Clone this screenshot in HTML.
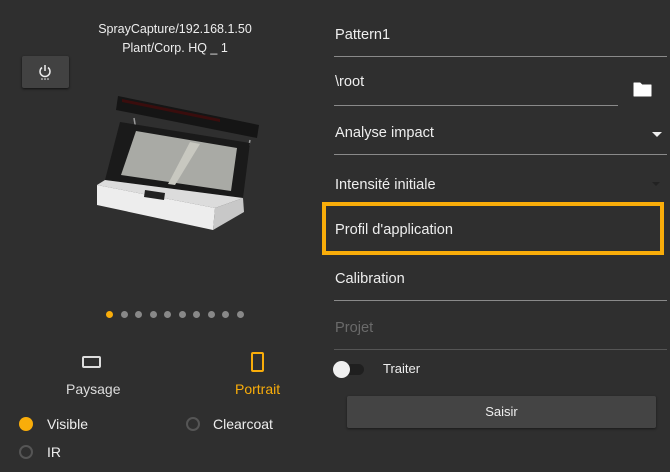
<!DOCTYPE html><html><head><style>
body{margin:0;width:670px;height:472px;background:#2f2f2f;font-family:"Liberation Sans",sans-serif;color:#eee;position:relative;overflow:hidden}
.a{position:absolute}
.t{font-size:14px}
.r{font-size:14.6px}
.line{position:absolute;height:1px;background:#8a8a8a}
</style></head><body>
<div class="a" style="left:0;width:350px;top:20px;text-align:center;font-size:12.5px;line-height:19px;color:#eee">SprayCapture/192.168.1.50<br>Plant/Corp. HQ _ 1</div>
<div class="a" style="left:22px;top:56px;width:47px;height:32px;background:#424242;border-radius:2px;box-shadow:0 1px 2px #111"></div>
<svg class="a" style="left:37px;top:64px" width="16" height="18" viewBox="0 0 16 18"><path d="M5 3.5A5 5 0 1 0 11 3.5" fill="none" stroke="#eee" stroke-width="1.5"/><line x1="8" y1="1" x2="8" y2="7" stroke="#eee" stroke-width="1.5"/><circle cx="5" cy="15" r=".8" fill="#eee"/><circle cx="8" cy="15" r=".8" fill="#eee"/><circle cx="11" cy="15" r=".8" fill="#eee"/></svg>
<!-- device -->
<svg class="a" style="left:90px;top:90px" width="175" height="145" viewBox="90 90 175 145">
<polygon points="118,96 259,125 257,138 116,110" fill="#151515"/>
<polygon points="122,99 220,119 220,122 122,102" fill="#3a0d0d"/>
<line x1="134" y1="118" x2="136" y2="130" stroke="#999" stroke-width="1.5"/>
<line x1="250" y1="140" x2="244" y2="170" stroke="#999" stroke-width="1.5"/>
<polygon points="120,122 250,143 243,198 105,180" fill="#1a1a1a"/>
<polygon points="136,131 237,148 231,191 121,175" fill="#a9aaa5"/>
<polygon points="190,142 200,144 175,185 168,184" fill="#c8c8c0"/>
<polygon points="105,180 243,198 215,208 97,185" fill="#dcdcdc"/>
<polygon points="97,185 215,208 213,230 97,205" fill="#ededed"/>
<polygon points="215,208 243,198 244,212 213,230" fill="#c8c8c8"/>
<polygon points="145,190 165,193 164,200 144,197" fill="#222"/>
</svg>
<!-- dots -->
<div class="a" style="left:106px;top:311px;display:flex;gap:7.5px">
<i style="width:7px;height:7px;border-radius:50%;background:#f9ad0a"></i><i style="width:7px;height:7px;border-radius:50%;background:#888"></i><i style="width:7px;height:7px;border-radius:50%;background:#888"></i><i style="width:7px;height:7px;border-radius:50%;background:#888"></i><i style="width:7px;height:7px;border-radius:50%;background:#888"></i><i style="width:7px;height:7px;border-radius:50%;background:#888"></i><i style="width:7px;height:7px;border-radius:50%;background:#888"></i><i style="width:7px;height:7px;border-radius:50%;background:#888"></i><i style="width:7px;height:7px;border-radius:50%;background:#888"></i><i style="width:7px;height:7px;border-radius:50%;background:#888"></i>
</div>
<div class="a" style="left:82px;top:356px;width:19px;height:12px;border:2.5px solid #ddd;border-radius:2px;box-sizing:border-box"></div>
<div class="a t" style="left:66px;top:381px;color:#ddd">Paysage</div>
<div class="a" style="left:251px;top:352px;width:13px;height:20px;border:2px solid #f9ad0a;border-radius:2px;box-sizing:border-box"></div>
<div class="a t" style="left:235px;top:381px;color:#f9ad0a">Portrait</div>
<div class="a" style="left:19px;top:417px;width:14px;height:14px;border-radius:50%;background:#f9ad0a"></div>
<div class="a t" style="left:47px;top:416px">Visible</div>
<div class="a" style="left:186px;top:417px;width:14px;height:14px;border-radius:50%;border:2px solid #555;box-sizing:border-box"></div>
<div class="a t" style="left:213px;top:416px">Clearcoat</div>
<div class="a" style="left:19px;top:445px;width:14px;height:14px;border-radius:50%;border:2px solid #555;box-sizing:border-box"></div>
<div class="a t" style="left:47px;top:444px">IR</div>
<!-- right -->
<div class="a r" style="left:335px;top:27px">Pattern1</div>
<div class="line" style="left:334px;top:56px;width:333px"></div>
<div class="a r" style="left:335px;top:74px">\root</div>
<div class="line" style="left:334px;top:105px;width:284px"></div>
<svg class="a" style="left:633px;top:82px" width="19" height="15" viewBox="0 0 19 15"><path d="M1 1h6l2 2h9v11H1z" fill="#fff" stroke="#fff" stroke-linejoin="round"/></svg>
<div class="a r" style="left:335px;top:125px">Analyse impact</div>
<div class="a" style="left:652px;top:132px;border:5px solid transparent;border-top-color:#eee;border-bottom:0"></div>
<div class="line" style="left:334px;top:154px;width:333px"></div>
<div class="a r" style="left:335px;top:177px">Intensité initiale</div>
<div class="a" style="left:652px;top:182px;border:4px solid transparent;border-top-color:#222;border-bottom:0"></div>
<div class="a" style="left:322px;top:202px;width:342px;height:53px;border:4px solid #f9ad0a;box-sizing:border-box"></div>
<div class="a r" style="left:335px;top:222px">Profil d'application</div>
<div class="a r" style="left:335px;top:271px">Calibration</div>
<div class="line" style="left:334px;top:300px;width:333px"></div>
<div class="a r" style="left:335px;top:320px;color:#6a6a6a">Projet</div>
<div class="line" style="left:334px;top:349px;width:333px;background:#555"></div>
<div class="a" style="left:338px;top:364px;width:26px;height:11px;border-radius:6px;background:#1f1f1f"></div>
<div class="a" style="left:333px;top:361px;width:17px;height:17px;border-radius:50%;background:#f0f0f0"></div>
<div class="a" style="left:383px;top:361px;font-size:13px">Traiter</div>
<div class="a" style="left:347px;top:396px;width:309px;height:32px;background:#444;border-radius:2px;box-shadow:0 1px 2px #1a1a1a;text-align:center;line-height:32px;font-size:13px">Saisir</div>
</body></html>
